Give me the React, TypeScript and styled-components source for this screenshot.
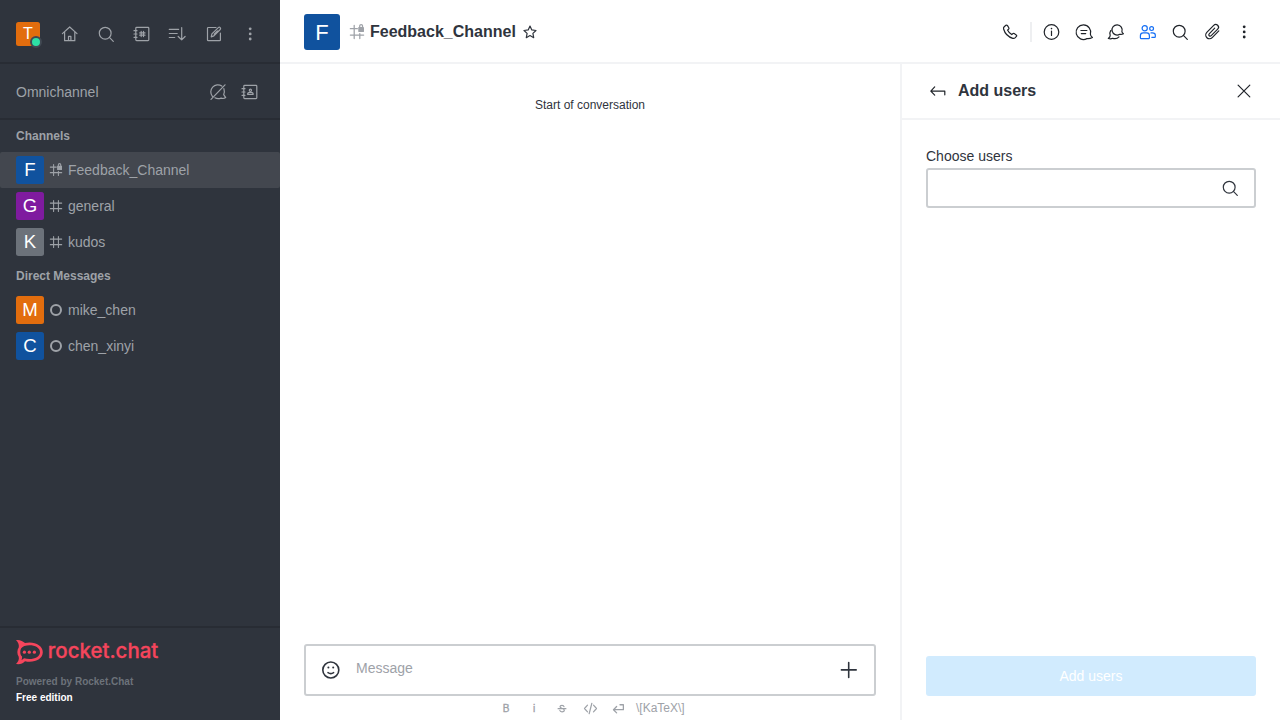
import React from 'react';
import styled, { createGlobalStyle } from 'styled-components';

const GlobalStyle = createGlobalStyle`
  *, *::before, *::after { box-sizing: border-box; }
  body {
    margin: 0;
    background: #fff;
    color: #2f343d;
    font-family: "Liberation Sans", Arial, sans-serif;
    font-size: 14px;
    line-height: 20px;
  }
  button { font: inherit; color: inherit; }
`;

type IconName =
  | 'home' | 'search' | 'directory' | 'sort' | 'edit' | 'kebab'
  | 'omniOff' | 'contacts' | 'hash' | 'hashLock' | 'star' | 'phone'
  | 'info' | 'threads' | 'discussion' | 'members' | 'clip' | 'back'
  | 'close' | 'emoji' | 'plus' | 'code' | 'enter' | 'strike';

const bookFrame = (
  <>
    <rect x="3.8" y="3.4" width="13" height="13.2" rx="0.8" />
    <path d="M2 6.7h3M2 10h3M2 13.3h3" />
  </>
);

const glyphs: Record<IconName, React.ReactNode> = {
  home: <path d="M2.4 9.6 9.7 3l7.3 6.6M4.6 8v8.7h10.2V8M8.5 16.7v-4.3h2.4v4.3" />,
  search: <><circle cx="9.2" cy="9.2" r="5.9" /><path d="m13.4 13.4 3.9 3.9" /></>,
  directory: <>{bookFrame}<path d="M9.2 7.4v5.2M11.5 7.4v5.2M7.7 8.9H13M7.7 11.2H13" /></>,
  sort: <path d="M1.3 5.4h9.3M1.3 9.5h7.9M1.3 13.5h5.4M13.7 3.6v12.2M10.2 12.5l3.5 3.4 3.4-3.4" />,
  edit: <path d="M12 3.5H4.3q-.8 0-.8.8v11.6q0 .8.8.8h11.3q.8 0 .8-.8V9M7.2 12.9l.7-3 6.4-6.3q1-.8 1.9 0 .8 1 0 1.9l-6.3 6.4zM10.2 10.1l3.2-3.2" />,
  kebab: (
    <g fill="currentColor" stroke="none">
      <circle cx="10.2" cy="4.8" r="1.4" /><circle cx="10.2" cy="9.9" r="1.4" /><circle cx="10.2" cy="15" r="1.4" />
    </g>
  ),
  omniOff: <path d="M4.4 14.3A7 7 0 0 1 13.8 4.1M15.9 6.6q1 3.4-.2 6l2 3q-2.1 1.5-4.6.5-3.4 1.3-6.2-.3M3 17.3 17 2.8" />,
  contacts: <>{bookFrame}<circle cx="10.4" cy="8.2" r="1.1" /><path d="M7.6 12.3q0-2 2-2h1.6q2 0 2 2z" /></>,
  hash: <path d="M6 .7v18.6M14 .7v18.6M.5 5.2h19M.5 14.4h19" />,
  hashLock: (
    <>
      <path d="M6 .7v18.6M14 12.3v7M.5 5.2h10M.5 14.4h19" />
      <rect x="11.8" y="2.8" width="8.2" height="7.2" rx=".6" fill="currentColor" stroke="none" />
      <path d="M13.9 3.4V1.2q0-1.8 2-1.8t2 1.8v2.2" />
    </>
  ),
  star: <path d="m10 4 1.8 3.9 4.2.6-3.1 2.9.8 4.3-3.7-2.1-3.7 2.1.8-4.3L4 8.5l4.2-.6z" />,
  phone: <path d="M4.2 4.7 5.9 3.3q.9-.6 1.6.3l1.3 2.1q.5.9-.3 1.6l-1 .8q1.3 2.7 4.2 4.5l1-.9q.7-.6 1.5-.1l2 1.3q.9.6.2 1.5L15 15.9q-.8.8-2.2.4C8.4 15 4.8 11.2 3.6 7q-.4-1.4.6-2.3Z" />,
  info: <><circle cx="9.5" cy="10" r="7.3" /><path d="M9.5 9v4.4" /><circle cx="9.5" cy="6.6" r=".8" fill="currentColor" stroke="none" /></>,
  threads: <path d="M12.9 16.6A7.3 7.3 0 1 1 16.4 12.2q.1 1.6 2 3.3-2.9 1.6-5.5 1.1ZM6.9 8.5h6M7.3 11.6h4.4" />,
  discussion: <path d="M13.7 12.3A5.1 5.1 0 1 1 15.9 9.6q.2 1.1 1.5 2.2-1.7 1-3.7.5ZM4.7 8.6q-1.5 2.4-.5 4.7.2 1.6-1.9 3.1 2.3.8 4.4-.1 4 1.1 6.3-1.4" />,
  members: (
    <>
      <circle cx="6.7" cy="6.3" r="2.6" /><circle cx="13.6" cy="6.6" r="1.9" />
      <path d="M2.4 16.1v-2.4q0-2.8 2.8-2.8h3.5q2.7 0 2.7 2.8v2.4q0 .5-.5.5h-8q-.5 0-.5-.5ZM13 10.9h1.4q2.9 0 2.9 2.2v1.6q0 .6-.7.6h-2.8" />
    </>
  ),
  clip: <path d="m16.8 8.9-6.6 6.7a3.6 3.6 0 0 1-5.4-5.2l6.9-7.1a2.7 2.7 0 0 1 4 3.9l-6.5 6.5a1.35 1.35 0 0 1-2-1.9l5.5-5.6" />,
  back: <path d="M2.9 10.1h13.9v3.7M6.7 5.9l-3.9 4.2 3.9 4" />,
  close: <path d="m4.1 4.2 11.7 11.7M15.8 4.2 4.1 15.9" />,
  emoji: (
    <>
      <circle cx="9.8" cy="10" r="8" />
      <path d="M7 12.6q2.8 2 5.6 0" />
      <g fill="currentColor" stroke="none"><circle cx="7.4" cy="7.6" r="1" /><circle cx="12.2" cy="7.6" r="1" /></g>
    </>
  ),
  plus: <path d="M9.7 2.6v14.8M2.4 9.9h14.8" />,
  code: <path d="M6 5.5 2 10l4 4.5M14 5.5l4 4.5-4 4.5M11.8 3 8.2 17" />,
  enter: <path d="M3.5 11.6h13V5h-4.5M7.5 7.4l-4.2 4.2 4.2 4.2" />,
  strike: <path d="M3.5 9.5h13M13.3 6.2q-.5-2.2-3.3-2.2-3.3 0-3.3 2.4 0 1.8 3.3 2.6 3.8.8 3.8 3.2 0 2.6-3.8 2.6-3.3 0-3.7-2.7" />,
};

const Svg = styled.svg`
  display: block;
  flex: none;
  overflow: visible;
  fill: none;
  stroke: currentColor;
  stroke-linecap: round;
  stroke-linejoin: round;
`;

const Icon = ({ name, size = 20, weight = 1.2 }: { name: IconName; size?: number; weight?: number }) => (
  <Svg viewBox="0 0 20 20" width={size} height={size} strokeWidth={weight} aria-hidden>
    {glyphs[name]}
  </Svg>
);

const Shell = styled.div`
  display: flex;
  width: 1280px;
  height: 720px;
  overflow: hidden;
`;

const Sidebar = styled.aside`
  display: flex;
  flex-direction: column;
  width: 280px;
  background: #2f343d;
  color: #9ea2a8;
`;

const SidebarToolbar = styled.header`
  display: flex;
  align-items: center;
  justify-content: space-between;
  height: 64px;
  padding: 6px 16px 0;
  border-bottom: 2px solid #282c34;
`;

const IconButton = styled.button<{ $color?: string; $size?: number }>`
  display: flex;
  align-items: center;
  justify-content: center;
  flex: none;
  width: ${(p) => p.$size ?? 28}px;
  height: ${(p) => p.$size ?? 28}px;
  padding: 0;
  border: 0;
  background: none;
  color: ${(p) => p.$color ?? 'inherit'};
`;

const Avatar = styled.span<{ $color: string; $size: number; $font: number }>`
  display: flex;
  align-items: center;
  justify-content: center;
  flex: none;
  width: ${(p) => p.$size}px;
  height: ${(p) => p.$size}px;
  padding-top: ${(p) => (p.$size > 30 ? 2 : 0)}px;
  border-radius: ${(p) => (p.$size > 30 ? 3 : 2.5)}px;
  background: ${(p) => p.$color};
  color: #fff;
  font-size: ${(p) => p.$font}px;
  line-height: 1;
`;

const UserAvatar = styled.div`
  position: relative;
`;

const Presence = styled.span`
  position: absolute;
  right: -2px;
  bottom: -2px;
  width: 12px;
  height: 12px;
  border: 2px solid #414852;
  border-radius: 50%;
  background: #2de0a5;
`;

const ToolbarIcons = styled.nav`
  display: flex;
  gap: 8px;
`;

const Omnichannel = styled.section`
  display: flex;
  align-items: center;
  height: 56px;
  padding: 0 16px;
  border-bottom: 2px solid #282c34;
`;

const OmniLabel = styled.span`
  flex: 1;
  padding-top: 2px;
`;

const OmniActions = styled.div`
  display: flex;
  gap: 4px;
  padding-top: 2px;
`;

const RoomList = styled.div`
  flex: 1;
`;

const GroupTitle = styled.h2`
  height: 32px;
  margin: 0;
  padding: 6px 16px;
  font-size: 12px;
  font-weight: 700;
  line-height: 20px;
`;

const Rooms = styled.ul`
  margin: 0;
  padding: 0;
  list-style: none;
`;

const Room = styled.li<{ $active?: boolean }>`
  display: flex;
  align-items: center;
  height: 36px;
  padding: 0 16px;
  border-radius: 2px;
  background: ${(p) => (p.$active ? '#43474f' : 'transparent')};
`;

const RoomMark = styled.span`
  display: flex;
  margin: 0 6px;
`;

const Offline = styled.span`
  width: 12px;
  height: 12px;
  border: 2px solid #9ea2a8;
  border-radius: 50%;
`;

const SidebarFooter = styled.footer`
  height: 94px;
  padding: 12px 16px 0;
  border-top: 2px solid #282c34;
  font-size: 10px;
  font-weight: 700;
  line-height: 16px;
`;

const Logo = styled.svg`
  display: block;
  margin: -2px 0 8px;
  fill: #f5455c;
`;

const LogoText = styled.text`
  font-family: Inter, sans-serif;
  font-size: 20.5px;
  font-weight: 500;
  stroke: #f5455c;
  stroke-width: 0.3px;
`;

const Powered = styled.div`
  color: #6c727a;
`;

const Edition = styled.div`
  color: #fff;
`;

const Page = styled.main`
  display: flex;
  flex-direction: column;
  flex: 1;
`;

const RoomHeader = styled.header`
  display: flex;
  align-items: center;
  height: 64px;
  padding: 2px 22px 0 24px;
  border-bottom: 2px solid #f2f3f5;
`;

const RoomTitle = styled.h1`
  margin: 0 4px 0 0;
  font-size: 16px;
  line-height: 24px;
`;

const HeaderMark = styled.span`
  display: flex;
  margin: 0 6px 0 10px;
  color: #9ea2a8;
`;

const HeaderActions = styled.div`
  display: flex;
  gap: 4px;
  margin-left: auto;
  color: #1f2329;
`;

const Divider = styled.span`
  width: 2px;
  height: 20px;
  margin: 4px 2px;
  background: #eeeff1;
`;

const Columns = styled.div`
  display: flex;
  flex: 1;
`;

const Conversation = styled.section`
  display: flex;
  flex-direction: column;
  width: 620px;
  padding: 31px 24px 0;
`;

const StartNote = styled.div`
  flex: 1;
  text-align: center;
  font-size: 12px;
`;

const Composer = styled.div`
  display: flex;
  align-items: center;
  height: 52px;
  padding: 0 11px;
  border: 2px solid #cbced1;
  border-radius: 3px;
`;

const Placeholder = styled.span`
  flex: 1;
  padding: 0 0 4px 11px;
  color: #9ea2a8;
`;

const Formatting = styled.div`
  display: flex;
  align-items: center;
  height: 24px;
  padding-left: 188px;
  color: #9ea2a8;
`;

const FormatItem = styled.span`
  display: flex;
  align-items: center;
  justify-content: center;
  width: 28px;
  padding-top: 1px;
  font-size: 10px;
`;

const FormatLetter = styled.span`
  -webkit-text-stroke: 0.35px currentColor;
`;

const Katex = styled.span`
  margin-left: 4px;
  font-size: 12px;
`;

const Panel = styled.aside`
  display: flex;
  flex-direction: column;
  width: 380px;
  border-left: 2px solid #f2f3f5;
`;

const PanelHeader = styled.header`
  display: flex;
  align-items: center;
  height: 56px;
  padding: 0 22px;
  border-bottom: 2px solid #f2f3f5;
  color: #1f2329;
`;

const PanelTitle = styled.h2`
  flex: 1;
  margin: 0 0 0 6px;
  color: #2f343d;
  font-size: 16px;
  line-height: 24px;
`;

const PanelBody = styled.div`
  display: flex;
  flex-direction: column;
  flex: 1;
  padding: 26px 24px 24px;
`;

const FieldLabel = styled.label`
  margin-bottom: 2px;
`;

const Field = styled.div`
  display: flex;
  align-items: center;
  justify-content: flex-end;
  height: 40px;
  padding-right: 14px;
  border: 2px solid #cbced1;
  border-radius: 3px;
`;

const SubmitButton = styled.button`
  height: 40px;
  margin-top: auto;
  padding: 0;
  border: 0;
  border-radius: 3px;
  background: #d1ebfe;
  color: #fff;
`;

const channels = [
  { name: 'Feedback_Channel', color: '#10529e', icon: 'hashLock' as IconName, active: true },
  { name: 'general', color: '#7f1b9f', icon: 'hash' as IconName },
  { name: 'kudos', color: '#6c727a', icon: 'hash' as IconName },
];

const directs = [
  { name: 'mike_chen', color: '#e26d0e' },
  { name: 'chen_xinyi', color: '#10529e' },
];

const sidebarIcons: IconName[] = ['home', 'search', 'directory', 'sort', 'edit', 'kebab'];
const headerIcons: IconName[] = ['info', 'threads', 'discussion', 'members', 'search', 'clip', 'kebab'];

const Brand = () => (
  <Logo width="146" height="28" viewBox="0 0 146 28">
    <path
      fillRule="evenodd"
      d="M0 2C4 1.6 7 3 9 5.1 18 3 26.8 7.4 26.8 14.2c0 7-8.8 11-17.8 9C7 25.4 4 26.6 0 26c2.3-2.1 3.3-4.7 2.7-7.2C.9 16 .9 12 2.8 9.2 3.2 6.8 2.2 4.1 0 2ZM8.3 7.9C5 9.2 4.3 11.4 4.3 14.2c0 1.7.6 3.3 1.8 4.4.1 1.3-.1 2.3-.6 3.3 1-.3 1.7-.8 2.5-1.6 8 2 16-.6 16-6.1 0-5.6-8-8.4-15.7-6.3Z"
    />
    <circle cx="8.4" cy="14.2" r="1.6" />
    <circle cx="13.3" cy="14.2" r="1.6" />
    <circle cx="18.4" cy="14.2" r="1.6" />
    <LogoText x="31.8" y="19.8" textLength="110.5" lengthAdjust="spacingAndGlyphs">rocket.chat</LogoText>
  </Logo>
);

export default function App() {
  return (
    <>
      <GlobalStyle />
      <Shell>
        <Sidebar>
          <SidebarToolbar>
            <UserAvatar>
              <Avatar $color="#e26d0e" $size={24} $font={16}>T</Avatar>
              <Presence />
            </UserAvatar>
            <ToolbarIcons>
              {sidebarIcons.map((name) => (
                <IconButton key={name}><Icon name={name} /></IconButton>
              ))}
            </ToolbarIcons>
          </SidebarToolbar>
          <Omnichannel>
            <OmniLabel>Omnichannel</OmniLabel>
            <OmniActions>
              <IconButton><Icon name="omniOff" /></IconButton>
              <IconButton><Icon name="contacts" /></IconButton>
            </OmniActions>
          </Omnichannel>
          <RoomList>
            <GroupTitle>Channels</GroupTitle>
            <Rooms>
              {channels.map((room) => (
                <Room key={room.name} $active={room.active}>
                  <Avatar $color={room.color} $size={28} $font={18.6}>{room.name[0].toUpperCase()}</Avatar>
                  <RoomMark><Icon name={room.icon} size={12} weight={1.8} /></RoomMark>
                  {room.name}
                </Room>
              ))}
            </Rooms>
            <GroupTitle>Direct Messages</GroupTitle>
            <Rooms>
              {directs.map((room) => (
                <Room key={room.name}>
                  <Avatar $color={room.color} $size={28} $font={18.6}>{room.name[0].toUpperCase()}</Avatar>
                  <RoomMark><Offline /></RoomMark>
                  {room.name}
                </Room>
              ))}
            </Rooms>
          </RoomList>
          <SidebarFooter>
            <Brand />
            <Powered>Powered by Rocket.Chat</Powered>
            <Edition>Free edition</Edition>
          </SidebarFooter>
        </Sidebar>
        <Page>
          <RoomHeader>
            <Avatar $color="#10529e" $size={36} $font={22}>F</Avatar>
            <HeaderMark><Icon name="hashLock" size={14} weight={1.8} /></HeaderMark>
            <RoomTitle>Feedback_Channel</RoomTitle>
            <IconButton $size={20}><Icon name="star" /></IconButton>
            <HeaderActions>
              <IconButton><Icon name="phone" /></IconButton>
              <Divider />
              {headerIcons.map((name) => (
                <IconButton key={name} $color={name === 'members' ? '#156ff5' : undefined}>
                  <Icon name={name} />
                </IconButton>
              ))}
            </HeaderActions>
          </RoomHeader>
          <Columns>
            <Conversation>
              <StartNote>Start of conversation</StartNote>
              <Composer>
                <IconButton><Icon name="emoji" weight={1.6} /></IconButton>
                <Placeholder>Message</Placeholder>
                <IconButton><Icon name="plus" weight={1.6} /></IconButton>
              </Composer>
              <Formatting>
                <FormatItem><FormatLetter>B</FormatLetter></FormatItem>
                <FormatItem><FormatLetter>i</FormatLetter></FormatItem>
                <FormatItem><Icon name="strike" size={12} weight={2} /></FormatItem>
                <FormatItem><Icon name="code" size={15} weight={1.6} /></FormatItem>
                <FormatItem><Icon name="enter" size={15} weight={1.7} /></FormatItem>
                <Katex>\[KaTeX\]</Katex>
              </Formatting>
            </Conversation>
            <Panel>
              <PanelHeader>
                <IconButton><Icon name="back" /></IconButton>
                <PanelTitle>Add users</PanelTitle>
                <IconButton><Icon name="close" /></IconButton>
              </PanelHeader>
              <PanelBody>
                <FieldLabel>Choose users</FieldLabel>
                <Field><Icon name="search" /></Field>
                <SubmitButton disabled>Add users</SubmitButton>
              </PanelBody>
            </Panel>
          </Columns>
        </Page>
      </Shell>
    </>
  );
}
